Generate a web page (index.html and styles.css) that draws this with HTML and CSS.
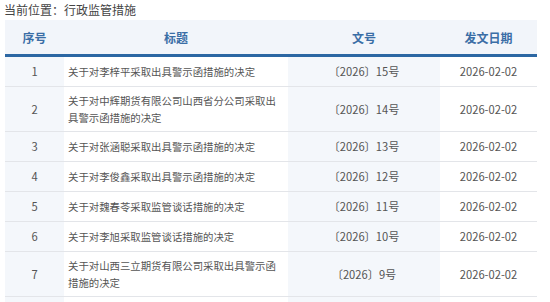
FILE: index.html
```html
<!DOCTYPE html>
<html lang="zh-CN">
<head>
<meta charset="utf-8">
<title>行政监管措施</title>
<link rel="stylesheet" href="styles.css">
</head>
<body>
<div class="crumb">当前位置：行政监管措施</div>
<table class="list">
  <colgroup>
    <col class="c-no"><col class="c-title"><col class="c-doc"><col class="c-date">
  </colgroup>
  <thead>
    <tr><th>序号</th><th>标题</th><th>文号</th><th>发文日期</th></tr>
  </thead>
  <tbody>
    <tr><td class="no">1</td><td class="title">关于对李梓平采取出具警示函措施的决定</td><td class="doc">〔2026〕15号</td><td class="date">2026-02-02</td></tr>
    <tr><td class="no">2</td><td class="title">关于对中辉期货有限公司山西省分公司采取出具警示函措施的决定</td><td class="doc">〔2026〕14号</td><td class="date">2026-02-02</td></tr>
    <tr><td class="no">3</td><td class="title">关于对张涵聪采取出具警示函措施的决定</td><td class="doc">〔2026〕13号</td><td class="date">2026-02-02</td></tr>
    <tr><td class="no">4</td><td class="title">关于对李俊鑫采取出具警示函措施的决定</td><td class="doc">〔2026〕12号</td><td class="date">2026-02-02</td></tr>
    <tr><td class="no">5</td><td class="title">关于对魏春苓采取监管谈话措施的决定</td><td class="doc">〔2026〕11号</td><td class="date">2026-02-02</td></tr>
    <tr><td class="no">6</td><td class="title">关于对李旭采取监管谈话措施的决定</td><td class="doc">〔2026〕10号</td><td class="date">2026-02-02</td></tr>
    <tr><td class="no">7</td><td class="title">关于对山西三立期货有限公司采取出具警示函措施的决定</td><td class="doc">〔2026〕9号</td><td class="date">2026-02-02</td></tr>
    <tr><td class="no"></td><td class="title"></td><td class="doc"></td><td class="date"></td></tr>
  </tbody>
</table>
</body>
</html>
```
FILE: styles.css
```css
html, body {
  margin: 0;
  padding: 0;
  background: #ffffff;
}
body {
  font-family: "Noto Sans CJK SC", "Noto Sans", sans-serif;
  color: #555555;
  overflow: hidden;
}
.crumb {
  font-size: 12px;
  line-height: 16px;
  padding: 2px 0 0 4px;
  height: 18px;
  color: #444444;
}
.list {
  margin-left: 5px;
  width: 532px;
  table-layout: fixed;
  border-collapse: separate;
  border-spacing: 0;
}
.c-no { width: 59px; }
.c-title { width: 224px; }
.c-doc { width: 152px; }
.c-date { width: 97px; }
.list thead tr { height: 37px; }
.list th {
  background: #f2f5fa;
  color: #3b6ea6;
  font-size: 12px;
  font-weight: bold;
  text-align: center;
  padding: 0;
  border-bottom: 3px solid #2c67a3;
}
.list tbody tr { height: 30px; }
.list td {
  font-size: 10.4px;
  line-height: 17px;
  padding: 5px 4px;
  border-bottom: 1px solid #e3e5e9;
  vertical-align: middle;
}
.list td.no,
.list td.doc {
  background: #f4f7fb;
  text-align: center;
}
.list td.no,
.list td.doc,
.list td.date {
  font-size: 11.2px;
}
.list td.title {
  text-align: left;
  padding-right: 8px;
}
.list td.date {
  text-align: center;
}
```
